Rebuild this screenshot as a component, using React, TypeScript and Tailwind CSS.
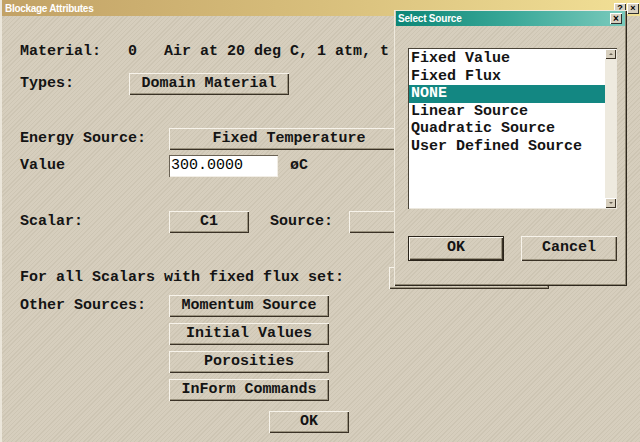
import type { ReactNode } from "react";

const hatch =
  "bg-[repeating-linear-gradient(135deg,#d6cebd_0px,#d6cebd_2px,#cdc5b3_2px,#cdc5b3_3px)]";

const mono = "font-['Liberation_Mono','Courier_New',monospace] font-bold text-[15px] text-[#141414]";

function Btn({ children, w, className = "" }: { children?: ReactNode; w: string; className?: string }) {
  return (
    <div
      className={`${w} h-[22px] flex items-center justify-center shrink-0 shadow-[inset_1px_1px_0_#f7f3ea,inset_-1px_-1px_0_#3a3226,inset_-2px_-2px_0_#9a927e] ${className}`}
    >
      {children}
    </div>
  );
}

function Row({ children, className = "" }: { children: ReactNode; className?: string }) {
  return <div className={`flex items-center h-[22px] leading-[22px] whitespace-pre ${className}`}>{children}</div>;
}

function TitleButton({ children }: { children: ReactNode }) {
  return (
    <div className="w-[12px] h-[11px] bg-[#d8d0bf] flex items-center justify-center text-[9px] leading-none font-bold text-black shadow-[inset_1px_1px_0_#ffffff,inset_-1px_-1px_0_#303030] font-['Liberation_Sans',sans-serif]">
      {children}
    </div>
  );
}

const items = ["Fixed Value", "Fixed Flux", "NONE", "Linear Source", "Quadratic Source", "User Defined Source"];

export default function App() {
  return (
    <div className={`relative w-[640px] h-[442px] overflow-hidden ${hatch}`}>
      {/* main window */}
      <div className="flex flex-col h-full border-l-2 border-[#ebe6da]">
        <div className="h-[16px] flex items-center justify-between pl-[3px] pr-[1px] bg-[linear-gradient(90deg,#c2a266,#d8bf7c_50%,#f2e096)]">
          <span className="text-white font-bold text-[10px] font-['Liberation_Sans',Arial,sans-serif] tracking-[-0.3px]">
            Blockage Attributes
          </span>
          <div className="flex gap-[1px]">
            <TitleButton>?</TitleButton>
            <TitleButton>×</TitleButton>
          </div>
        </div>

        <div className={`flex flex-col pl-[18px] pt-[25px] ${mono}`}>
          <Row>Material:   0   Air at 20 deg C, 1 atm, t</Row>

          <Row className="mt-[10px]">
            <span className="w-[109px]">Types:</span>
            <Btn w="w-[160px]">Domain Material</Btn>
          </Row>

          <Row className="mt-[33px]">
            <span className="w-[149px]">Energy Source:</span>
            <Btn w="w-[240px]">Fixed Temperature</Btn>
          </Row>

          <Row className="mt-[5px]">
            <span className="w-[149px]">Value</span>
            <div className="w-[109px] h-[22px] bg-white pl-[2px] font-normal text-black shadow-[inset_1px_1px_0_#6a6254,inset_-1px_-1px_0_#f2eee6]">
              300.0000
            </div>
            <span className="ml-[12px]">øC</span>
          </Row>

          <Row className="mt-[34px]">
            <span className="w-[149px]">Scalar:</span>
            <Btn w="w-[80px]">C1</Btn>
            <span className="ml-[21px] w-[79px]">Source:</span>
            <Btn w="w-[160px]" />
          </Row>

          <Row className="mt-[34px]">
            <span className="w-[369px]">For all Scalars with fixed flux set:</span>
            <Btn w="w-[160px]" />
          </Row>

          <Row className="mt-[6px]">
            <span className="w-[149px]">Other Sources:</span>
            <Btn w="w-[160px]">Momentum Source</Btn>
          </Row>
          <Row className="mt-[6px] pl-[149px]">
            <Btn w="w-[160px]">Initial Values</Btn>
          </Row>
          <Row className="mt-[6px] pl-[149px]">
            <Btn w="w-[160px]">Porosities</Btn>
          </Row>
          <Row className="mt-[6px] pl-[149px]">
            <Btn w="w-[160px]">InForm Commands</Btn>
          </Row>
          <Row className="mt-[10px] pl-[249px]">
            <Btn w="w-[80px]">OK</Btn>
          </Row>
        </div>
      </div>

      {/* Select Source dialog */}
      <div
        className={`absolute left-[394px] top-[10px] w-[233px] h-[276px] ${hatch} shadow-[inset_1px_1px_0_#eee9dd,inset_-1px_-1px_0_#2e281e,inset_-2px_-2px_0_#8e8672] flex flex-col`}
      >
        <div className="mx-[2px] mt-[1px] h-[15px] flex items-center justify-between pl-[2px] pr-[3px] bg-[linear-gradient(90deg,#0c8676,#3aa898_50%,#7acabc)]">
          <span className="text-white font-bold text-[10px] font-['Liberation_Sans',Arial,sans-serif] tracking-[-0.2px]">
            Select Source
          </span>
          <div className="w-[12px] h-[11px] bg-[#d8d0bf] flex items-center justify-center text-[10px] leading-none font-bold text-black shadow-[inset_1px_1px_0_#ffffff,inset_-1px_-1px_0_#303030] font-['Liberation_Sans',sans-serif]">
            ×
          </div>
        </div>

        <div className="ml-[14px] mt-[22px] w-[209px] h-[161px] bg-white flex p-[1px] shadow-[inset_1px_1px_0_#4a4438,inset_-1px_-1px_0_#ece8de]">
          <div className={`flex-1 flex flex-col pt-[1px] ${mono}`}>
            {items.map((it) => (
              <div
                key={it}
                className={`h-[17.6px] leading-[17.6px] pl-[2px] whitespace-pre ${
                  it === "NONE" ? "bg-[#138782] text-white" : ""
                }`}
              >
                {it}
              </div>
            ))}
          </div>
          <div className="w-[11px] flex flex-col justify-between bg-[#eeeadf]">
            <div className="h-[10px] bg-[#d8d0bf] flex items-center justify-center shadow-[inset_1px_1px_0_#ffffff,inset_-1px_-1px_0_#3a3226]">
              <div className="w-0 h-0 border-x-[2px] border-x-transparent border-b-[2px] border-b-[#6a6254]" />
            </div>
            <div className="h-[10px] bg-[#d8d0bf] flex items-center justify-center shadow-[inset_1px_1px_0_#ffffff,inset_-1px_-1px_0_#3a3226]">
              <div className="w-0 h-0 border-x-[2px] border-x-transparent border-t-[2px] border-t-[#6a6254]" />
            </div>
          </div>
        </div>

        <div className={`flex ml-[14px] mt-[27px] gap-[17px] ${mono}`}>
          <Btn w="w-[96px] border border-[#2a241a]" className="!h-[25px]">
            OK
          </Btn>
          <Btn w="w-[96px]" className="!h-[25px]">
            Cancel
          </Btn>
        </div>
      </div>
    </div>
  );
}
